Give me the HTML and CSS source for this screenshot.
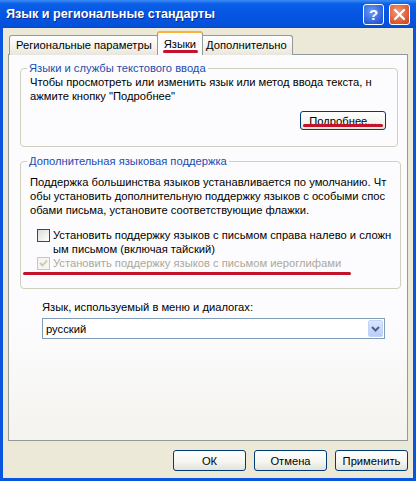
FILE: index.html
```html
<!DOCTYPE html>
<html lang="ru">
<head>
    <meta charset="UTF-8">
    <title>Язык и региональные стандарты</title>
    <link rel="stylesheet" href="styles.css">
</head>
<body>
    <div class="window">
        <div class="titlebar">
            <span class="title">Язык и региональные стандарты</span>
            <div class="title-buttons">
                <span class="tbtn help">?</span>
                <span class="tbtn close">
                    <svg width="13" height="13" viewBox="0 0 13 13"><path d="M2 2 L11 11 M11 2 L2 11" stroke="#fff" stroke-width="2.2" stroke-linecap="round"/></svg>
                </span>
            </div>
        </div>

        <div class="client">
            <div class="tabs">
                <div class="tab tab-first">Региональные параметры</div>
                <div class="tab active">Языки<span class="mark mark-tab"></span></div>
                <div class="tab">Дополнительно</div>
            </div>

            <div class="panel">
                <fieldset class="group group-input">
                    <legend>Языки и службы текстового ввода</legend>
                    <p class="text">Чтобы просмотреть или изменить язык или метод ввода текста, н<br>ажмите кнопку "Подробнее"</p>
                    <div class="row-right">
                        <button class="btn btn-more">Подробнее...<span class="mark mark-btn"></span></button>
                    </div>
                </fieldset>

                <fieldset class="group group-extra">
                    <legend>Дополнительная языковая поддержка</legend>
                    <p class="text">Поддержка большинства языков устанавливается по умолчанию. Чт<br>обы установить дополнительную поддержку языков с особыми спос<br>обами письма, установите соответствующие флажки.</p>
                    <div class="check">
                        <span class="box"></span>
                        <span class="check-label">Установить поддержку языков с письмом справа налево и сложн<br>ым письмом (включая тайский)</span>
                    </div>
                    <div class="check disabled">
                        <span class="box">
                            <svg width="9" height="9" viewBox="0 0 9 9"><path d="M1 4 L3.5 6.5 L8 1.5" fill="none" stroke="#c8c6b8" stroke-width="1.8"/></svg>
                        </span>
                        <span class="check-label">Установить поддержку языков с письмом иероглифами</span>
                        <span class="mark mark-row"></span>
                    </div>
                </fieldset>

                <div class="lang">
                    <div class="lang-label">Язык, используемый в меню и диалогах:</div>
                    <div class="select">
                        <span class="select-value">русский</span>
                        <span class="select-arrow">
                            <svg width="9" height="6" viewBox="0 0 9 6"><path d="M1 1 L4.5 4.5 L8 1" fill="none" stroke="#4d6185" stroke-width="2"/></svg>
                        </span>
                    </div>
                </div>
            </div>

            <div class="footer">
                <button class="btn">ОК</button>
                <button class="btn">Отмена</button>
                <button class="btn">Применить</button>
            </div>
        </div>
    </div>
</body>
</html>
```

FILE: styles.css
```css
body {
    margin: 0;
    font-family: "Liberation Sans", Arial, sans-serif;
    font-size: 11.2px;
    color: #000;
}
.window {
    width: 416px;
    height: 481px;
    display: flex;
    flex-direction: column;
    background: #0a55e0;
    box-sizing: border-box;
}
.titlebar {
    height: 28px;
    display: flex;
    align-items: center;
    justify-content: space-between;
    padding: 0 6px 0 6px;
    background: linear-gradient(#3b8cf6 0, #0b5fe6 4px, #0556e3 14px, #0451da 26px, #0847c4 28px);
}
.title {
    color: #fff;
    font-weight: bold;
    font-size: 12.6px;
    text-shadow: 1px 1px 0 #0b2a8a;
}
.title-buttons {
    display: flex;
    gap: 5px;
}
.tbtn {
    width: 19px;
    height: 19px;
    border: 1px solid #fff;
    border-radius: 3px;
    display: flex;
    align-items: center;
    justify-content: center;
    color: #fff;
    font-weight: bold;
    font-size: 15px;
}
.help {
    background: radial-gradient(circle at 40% 35%, #6a9cf5, #2a5fdc 70%, #1c4cc4);
}
.close {
    background: radial-gradient(circle at 40% 35%, #f09a7e, #df5a35 65%, #c24421);
}
.client {
    flex: 1;
    background: #ece9d8;
    margin: 0 3px 3px 3px;
    padding: 4px 5px 0 5px;
    display: flex;
    flex-direction: column;
}
.tabs {
    display: flex;
    align-items: flex-end;
    padding-left: 1px;
    height: 23px;
    position: relative;
    z-index: 1;
}
.tab {
    height: 19px;
    line-height: 19px;
    padding: 0 5px;
    border: 1px solid #919b9c;
    border-bottom: none;
    border-radius: 3px 3px 0 0;
    background: linear-gradient(#ffffff, #f3f2ec 60%, #e8e6dc);
    margin-left: -1px;
    position: relative;
}
.tab-first {
    margin-left: 0;
    padding: 0 6px;
}
.tab.active {
    height: 22px;
    line-height: 22px;
    background: #fcfcfe;
    border-top: 2px solid #f6b43a;
    padding: 0 6px;
    margin: 0 -2px;
    z-index: 2;
}
.panel {
    height: 387px;
    border: 1px solid #919b9c;
    margin-top: -1px;
    background: linear-gradient(#fcfcfe 70%, #f4f3ee);
    padding: 7px 9px 0 11px;
    box-sizing: border-box;
}
.group {
    border: 1px solid #d0d0bf;
    border-radius: 4px;
    margin: 0;
    padding: 0 9px 0 9px;
}
.group legend {
    color: #1d4bb0;
    padding: 0 2px;
    margin-left: -3px;
}
.text {
    margin: 1px 0 0 0;
    line-height: 14px;
    white-space: nowrap;
}
.group-input {
    height: 85px;
    box-sizing: border-box;
}
.row-right {
    display: flex;
    justify-content: flex-end;
    padding-right: 2px;
    margin-top: 8px;
}
.btn {
    font-family: inherit;
    font-size: 11.2px;
    color: #000;
    width: 73px;
    height: 21px;
    border: 1px solid #003c74;
    border-radius: 3px;
    background: linear-gradient(#ffffff, #f4f4f0 60%, #e3e2da);
    padding: 0;
    position: relative;
}
.btn-more {
    width: 86px;
    height: 19px;
}
.group-extra {
    margin-top: 8px;
    height: 134px;
    box-sizing: border-box;
}
.group-extra .text {
    margin-top: 8px;
}
.check {
    display: flex;
    align-items: flex-start;
    gap: 3px;
    margin-top: 11px;
    padding-left: 7px;
    line-height: 14px;
    white-space: nowrap;
    position: relative;
}
.check + .check {
    margin-top: 0;
}
.box {
    width: 11px;
    height: 11px;
    border: 1px solid #1c5180;
    background: linear-gradient(135deg, #dcdcd7, #ffffff);
    margin-top: 1px;
    display: flex;
    align-items: center;
    justify-content: center;
    flex-shrink: 0;
}
.disabled {
    color: #aca899;
}
.disabled .box {
    border-color: #cac8bb;
    background: #f6f5f0;
}
.mark {
    position: absolute;
    background: #c3132b;
    border-radius: 2px;
}
.mark-tab {
    left: 5px;
    right: 4px;
    bottom: 2px;
    height: 3px;
}
.mark-btn {
    left: 2px;
    right: 2px;
    bottom: 2px;
    height: 3px;
}
.mark-row {
    left: -7px;
    width: 328px;
    top: 16px;
    height: 3px;
}
.lang {
    padding: 11px 13px 0 22px;
}
.lang-label {
    line-height: 14px;
}
.select {
    margin-top: 4px;
    height: 21px;
    border: 1px solid #7f9db9;
    background: #fff;
    display: flex;
    align-items: center;
    justify-content: space-between;
    box-sizing: border-box;
    padding: 0 1px 0 3px;
}
.select-arrow {
    width: 15px;
    height: 17px;
    background: linear-gradient(#dbe6fd, #b9cdf7);
    border: 1px solid #c3d3fd;
    border-radius: 2px;
    box-sizing: border-box;
    display: flex;
    align-items: center;
    justify-content: center;
}
.footer {
    display: flex;
    justify-content: flex-end;
    gap: 8px;
    padding: 9px 0 0 0;
}
```
